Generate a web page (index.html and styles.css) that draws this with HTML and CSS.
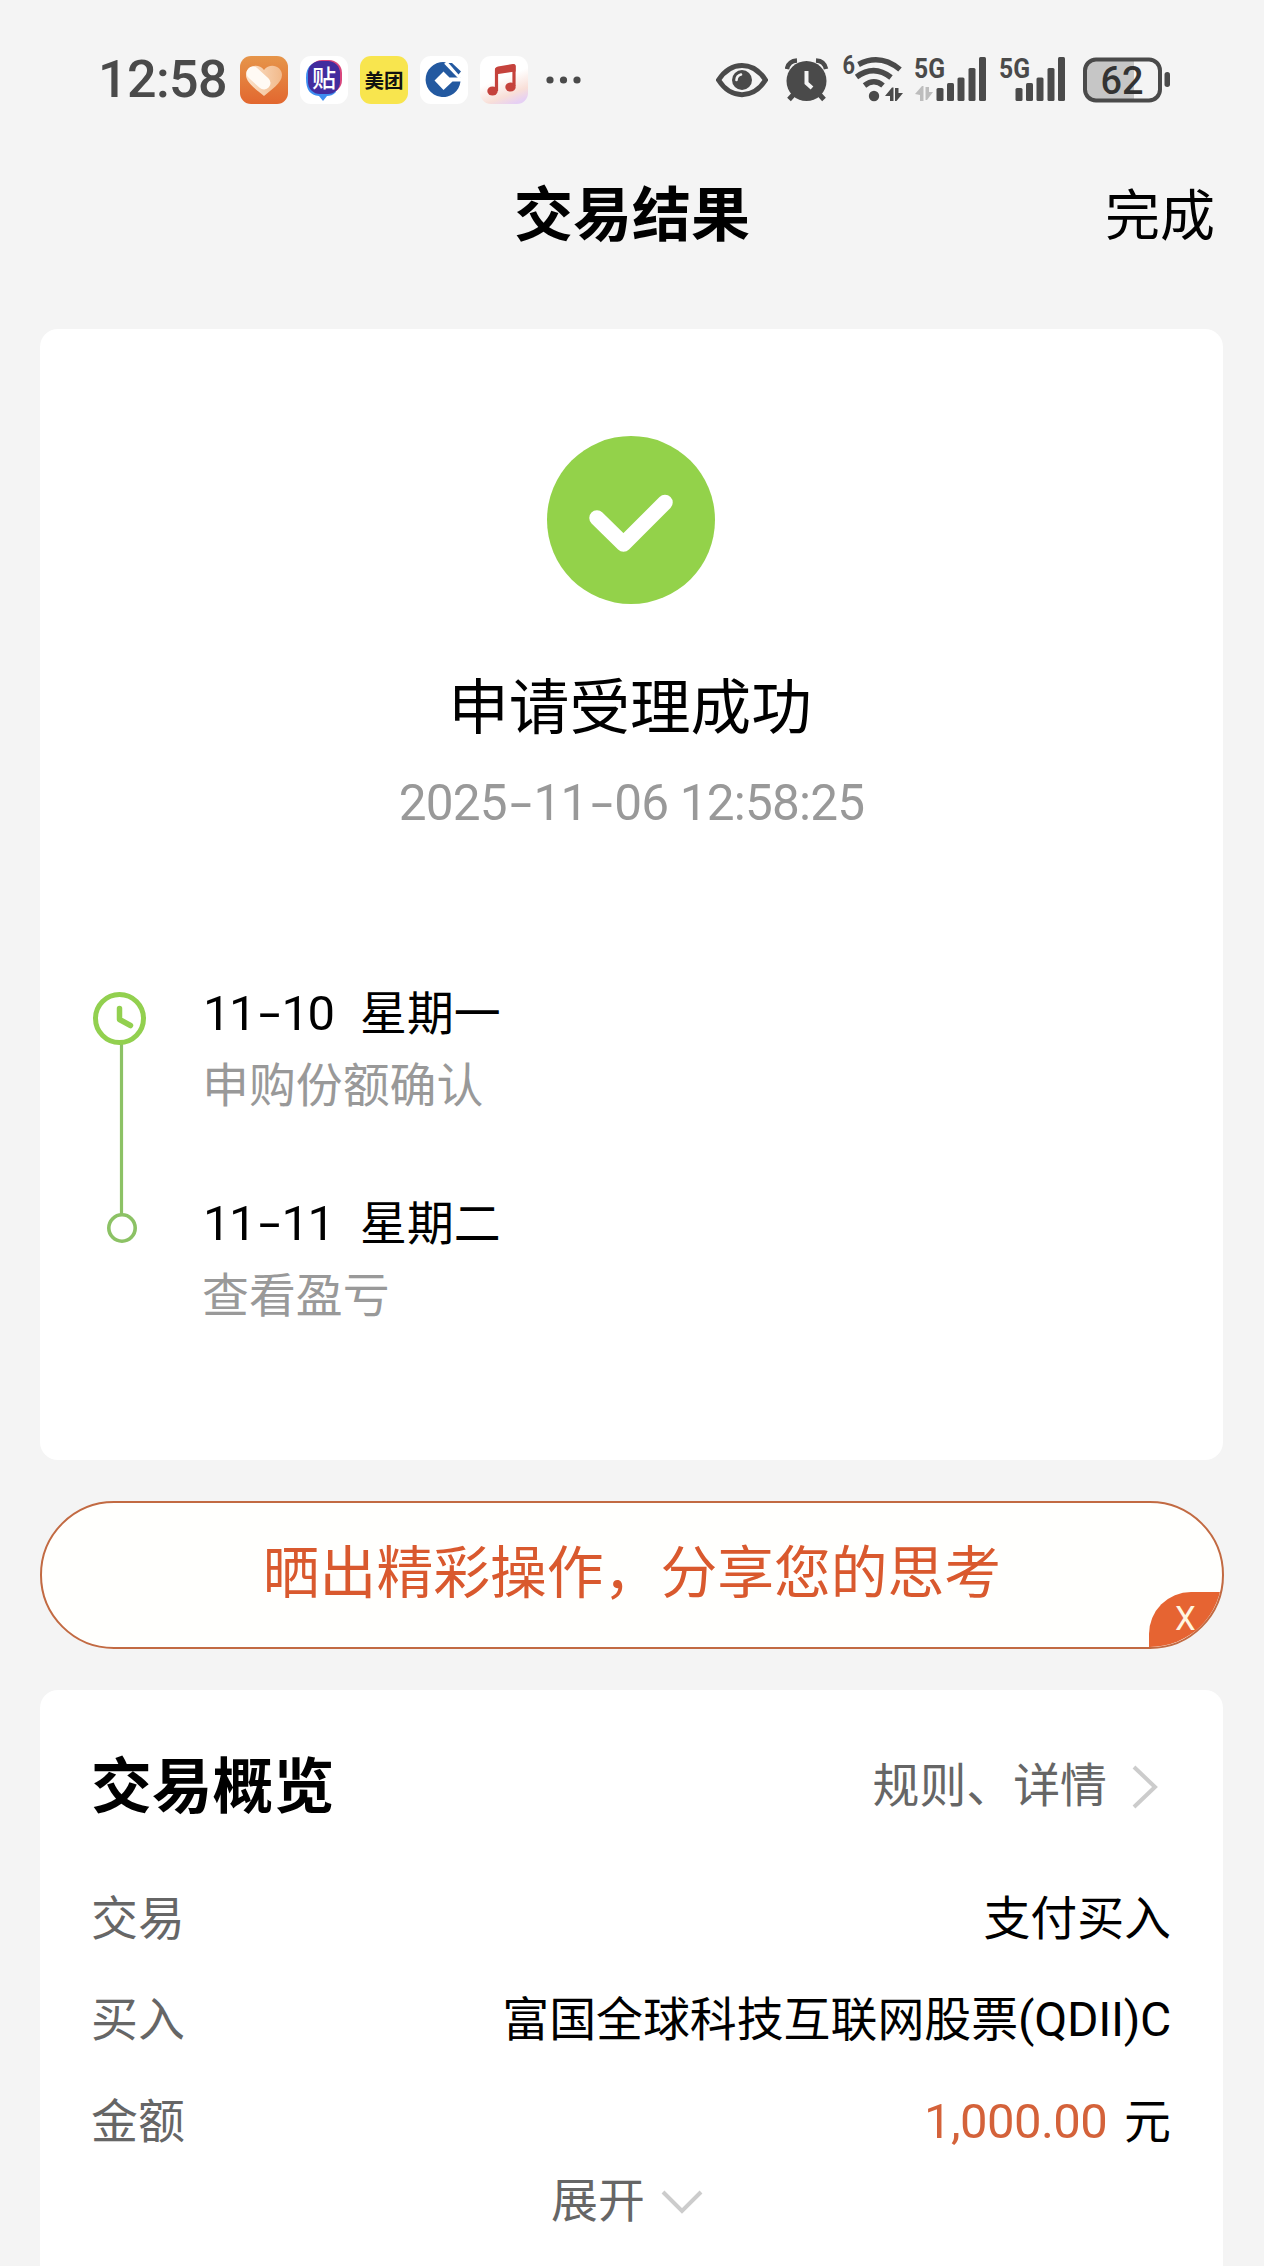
FILE: index.html
```html
<!DOCTYPE html>
<html lang="zh-CN">
<head>
  <meta charset="UTF-8" />
  <meta name="viewport" content="width=device-width, initial-scale=1.0" />
  <title>交易结果</title>
  <link rel="stylesheet" href="styles.css">
</head>
<body>
  <div class="statusbar">
    <div class="status-left">
      <span class="clock">12:58</span>
      <svg class="app" viewBox="0 0 48 48">
        <defs>
          <linearGradient id="orange" x1="0" y1="0" x2="0" y2="1"><stop offset="0" stop-color="#e6954a"/><stop offset="1" stop-color="#e2672f"/></linearGradient>
          <linearGradient id="heart" x1="0" y1="0" x2="1" y2="0"><stop offset="0" stop-color="#fbe3cc"/><stop offset="1" stop-color="#f2b98a"/></linearGradient>
        </defs>
        <rect width="48" height="48" rx="11" fill="url(#orange)"/>
        <path d="M24 40C17 34 6 27 6 19c0-9 12-13 18-5 6-8 18-4 18 5 0 8-11 15-18 21z" fill="url(#heart)"/>
        <path d="M13 17L24 27" stroke="#fffaf4" stroke-width="13" stroke-linecap="round"/>
      </svg>
      <svg class="app" viewBox="0 0 48 48">
        <rect width="48" height="48" rx="11" fill="#fff"/>
        <rect x="9" y="4" width="33" height="33" rx="13" fill="#d8467c"/>
        <path d="M6 22C6 10 12 6 22 6l14 30c-3 3-6 4-9 4l-4 5-4-5C10 39 6 34 6 22z" fill="#3e8df0"/>
        <rect x="8" y="5" width="32" height="33" rx="12" fill="#432c9e"/>
        <text class="app-text" x="24" y="30.500" font-size="24" fill="#fff">贴</text>
      </svg>
      <svg class="app" viewBox="0 0 48 48">
        <rect width="48" height="48" rx="11" fill="#f8e54e"/>
        <text class="app-text bold" x="24" y="31.500" font-size="19.500" fill="#111">美团</text>
      </svg>
      <svg class="app" viewBox="0 0 48 48">
        <rect width="48" height="48" rx="11" fill="#fff"/>
        <path fill-rule="evenodd" d="M27 6.500A17.500 17.500 0 1 0 40.500 25.500H32.500L23.500 34 14.500 24.500 23.500 15.500 29.500 21.500H41z" fill="#2359a0"/>
        <path d="M26 6L41 21.500" stroke="#fff" stroke-width="5"/>
        <path d="M28.500 7h3.500L41 15.500l-2.500 3z" fill="#2359a0"/>
      </svg>
      <svg class="app" viewBox="0 0 48 48">
        <defs>
          <linearGradient id="music" x1=".3" y1="0" x2=".7" y2="1"><stop offset=".45" stop-color="#fff"/><stop offset=".8" stop-color="#f8dfd8"/><stop offset="1" stop-color="#e6d0f4"/></linearGradient>
        </defs>
        <rect width="48" height="48" rx="11" fill="url(#music)"/>
        <path d="M16.500 35V13.500L34 10v20" fill="none" stroke="#c5423c" stroke-width="3.200" stroke-linejoin="round"/>
        <path d="M15 12.500Q16 11 18 10.500L33 8q2.600-.2 2.600 2v5.500L15 18.500z" fill="#c5423c"/>
        <ellipse cx="12.500" cy="35" rx="5.200" ry="4.600" fill="#c5423c"/>
        <ellipse cx="30.500" cy="31" rx="5.200" ry="4.600" fill="#c5423c"/>
      </svg>
      <svg class="more" viewBox="0 0 36 8">
        <circle cx="4" cy="4" r="3.600"/><circle cx="17.500" cy="4" r="3.600"/><circle cx="31" cy="4" r="3.600"/>
      </svg>
    </div>
    <div class="status-right">
      <svg width="52" height="48" viewBox="716 56 52 48">
        <path d="M718.500 80C731 60.500 753 60.500 765.500 80 753 99.500 731 99.500 718.500 80z" fill="none" stroke="#4a4a4a" stroke-width="5"/>
        <circle cx="742" cy="80" r="10" fill="#4a4a4a"/>
        <path d="M736.500 80a6 6 0 0 1 4.500-5.500" fill="none" stroke="#f4f4f4" stroke-width="2.600" stroke-linecap="round"/>
      </svg>
      <svg class="alarm" width="44" height="48" viewBox="785 56 44 48">
        <circle cx="806.500" cy="81" r="20" fill="#4a4a4a"/>
        <path d="M787 69q1.500-8 10-8.500M826 69q-1.500-8-10-8.500" fill="none" stroke="#4a4a4a" stroke-width="4.500"/>
        <path d="M794 94l-5 5.500M819 94l5 5.500" stroke="#4a4a4a" stroke-width="5"/>
        <path d="M806.500 71v12l5.500 5" fill="none" stroke="#f4f4f4" stroke-width="4"/>
      </svg>
      <svg class="wifi" width="62" height="68" viewBox="841 46 62 68">
        <text class="net" x="842.500" y="74" font-size="25" textLength="12.500" lengthAdjust="spacingAndGlyphs">6</text>
        <g fill="none" stroke="#4a4a4a" stroke-width="5.500">
          <path d="M858.500 64.500Q880 53 900 69.500"/>
          <path d="M856.500 77Q874 64 891 77.500"/>
          <path d="M864.500 85.500Q874 78 883 85.500"/>
        </g>
        <circle cx="874" cy="96" r="5.200" fill="#4a4a4a"/>
        <path d="M885 96l7-8.500h1.500V101H890v-5zM895 88h3.500v5h4.500l-6.500 8H895z" fill="#4a4a4a"/>
      </svg>
      <svg class="signal" width="75" height="68" viewBox="912 46 75 68">
        <text class="net" x="914" y="77.500" font-size="28" textLength="31" lengthAdjust="spacingAndGlyphs">5G</text>
        <path d="M915 94l7-8h1.500V101H920v-6zM925.500 87h3.500v5h4l-6 8h-1.500z" fill="#bdbdbd"/>
        <g fill="#4a4a4a">
          <rect x="936.500" y="88" width="7" height="13" rx="1.500"/><rect x="947" y="83" width="7" height="18" rx="1.500"/><rect x="957.500" y="77.500" width="7" height="23.500" rx="1.500"/><rect x="968.500" y="68" width="7" height="33" rx="1.500"/><rect x="979" y="57" width="7" height="44" rx="1.500"/>
        </g>
      </svg>
      <svg class="signal2" width="70" height="68" viewBox="997 46 70 68">
        <text class="net" x="999" y="77.500" font-size="28" textLength="31" lengthAdjust="spacingAndGlyphs">5G</text>
        <g fill="#4a4a4a">
          <rect x="1015.500" y="88" width="7" height="13" rx="1.500"/><rect x="1026" y="83" width="7" height="18" rx="1.500"/><rect x="1036.500" y="77.500" width="7" height="23.500" rx="1.500"/><rect x="1047.500" y="68" width="7" height="33" rx="1.500"/><rect x="1058" y="57" width="7" height="44" rx="1.500"/>
        </g>
      </svg>
      <svg class="battery" width="89" height="46" viewBox="1082 56 89 46">
        <path d="M1134 58.500h-38q-11 0-11 11v19q0 11 11 11h38z" fill="#c6c6c6"/>
        <rect x="1085" y="58.500" width="75" height="41" rx="11" fill="none" stroke="#4a4a4a" stroke-width="4"/>
        <rect x="1164.500" y="71" width="5.500" height="15" rx="2.700" fill="#4a4a4a"/>
        <text x="1122" y="93" font-size="39" font-weight="500" text-anchor="middle" textLength="43" lengthAdjust="spacingAndGlyphs" fill="#333">62</text>
      </svg>
    </div>
  </div>

  <header class="navbar">
    <h1>交易结果</h1>
    <a class="done">完成</a>
  </header>

  <section class="card result">
    <svg class="success" viewBox="0 0 168 168">
      <circle cx="84" cy="84" r="84" fill="#93d24a"/>
      <path d="M50 82L76.500 108 118 66.500" fill="none" stroke="#fff" stroke-width="15.500" stroke-linecap="round" stroke-linejoin="round"/>
    </svg>
    <h2>申请受理成功</h2>
    <p class="datetime">2025<i>-</i>11<i>-</i>06 12:58:25</p>

    <div class="timeline">
      <svg class="track" width="54" height="254" viewBox="93 991 54 254">
        <path d="M121.500 1044v170" stroke="#8cc265" stroke-width="3.200"/>
        <circle cx="119.500" cy="1018.500" r="24" fill="#fff" stroke="#92d04f" stroke-width="5"/>
        <path d="M119.500 1008.500v11l11 6" fill="none" stroke="#92d04f" stroke-width="5.500" stroke-linecap="round" stroke-linejoin="round"/>
        <circle cx="122" cy="1228" r="13.200" fill="#fff" stroke="#8cc265" stroke-width="3.600"/>
      </svg>
      <ul>
        <li>
          <p class="day"><span class="num">11<i>-</i>10</span>星期一</p>
          <p class="note">申购份额确认</p>
        </li>
        <li>
          <p class="day"><span class="num">11<i>-</i>11</span>星期二</p>
          <p class="note">查看盈亏</p>
        </li>
      </ul>
    </div>
  </section>

  <div class="share">
    <span>晒出精彩操作，分享您的思考</span>
    <b class="close">X</b>
  </div>

  <section class="card overview">
    <div class="overview-head">
      <h3>交易概览</h3>
      <a class="rules">规则、详情
        <svg width="28" height="46" viewBox="0 0 28 46"><path d="M3 3l21 20L3 43" fill="none" stroke="#ccc" stroke-width="4"/></svg>
      </a>
    </div>
    <dl>
      <div class="row"><dt>交易</dt><dd>支付买入</dd></div>
      <div class="row"><dt>买入</dt><dd>富国全球科技互联网股票<span class="latin">(QDII)C</span></dd></div>
      <div class="row"><dt>金额</dt><dd><span class="amount">1,000.00</span>元</dd></div>
    </dl>
    <a class="expand">展开
      <svg width="42" height="26" viewBox="0 0 42 26"><path d="M2 3l19 19L40 3" fill="none" stroke="#ccc" stroke-width="4"/></svg>
    </a>
  </section>
</body>
</html>
```
FILE: styles.css
```css
* { box-sizing: border-box; margin: 0; padding: 0; }
body { width: 1264px; height: 2266px; overflow: hidden; background: #f4f4f4; color: #000; font-family: Roboto, "Noto Sans CJK SC", sans-serif; font-size: 46.9px; }
i { font-style: normal; }
ul { list-style: none; }
svg { display: block; flex: none; }

/* status bar */
.statusbar { display: flex; justify-content: space-between; align-items: center; height: 160px; padding: 0 93px 0 98px; }
.status-left, .status-right { display: flex; align-items: center; }
.clock { width: 142px; font-size: 52px; font-weight: 500; line-height: 60px; color: #4a4a4a; letter-spacing: -0.6px; }
.app { width: 48px; height: 48px; margin-right: 12px; }
.app-text { text-anchor: middle; font-weight: 500; }
.app-text.bold { font-weight: 700; }
.more { width: 36px; height: 8px; margin-left: 6px; fill: #4a4a4a; }
.alarm { margin-left: 17px; }
.wifi { margin-left: 12px; }
.signal { margin-left: 9px; }
.signal2 { margin-left: 10px; }
.battery { margin-left: 15px; }
.net { font-weight: 700; fill: #4a4a4a; }

/* title bar */
.navbar { display: grid; grid-template-columns: 1fr auto 1fr; align-items: center; height: 108px; padding: 3px 49px 0; }
.navbar h1 { grid-column: 2; font-size: 59px; line-height: 80px; }
.done { justify-self: end; font-size: 55px; line-height: 80px; }

.card { margin: 0 41px 0 40px; background: #fff; border-radius: 18px; }

/* result card */
.result { height: 1131px; margin-top: 61px; padding-top: 107px; }
.success { width: 168px; height: 168px; margin: 0 auto; transform: translateX(-1px); }
.result h2 { margin-top: 63px; padding-right: 3px; font-size: 60.6px; font-weight: 400; line-height: 84px; text-align: center; }
.datetime { margin-top: 19px; font-size: 49.5px; line-height: 66px; text-align: center; color: #999; letter-spacing: -0.8px; }
.datetime i, .num i { display: inline-block; width: 26.7px; text-align: center; transform: scaleX(1.6); }
.timeline { display: flex; gap: 56px; margin-top: 155px; padding-left: 53px; }
.timeline li { height: 210px; }
.day { height: 65px; line-height: 46px; }
.num { display: inline-block; width: 157px; font-size: 49px; letter-spacing: -1.6px; }
.note { line-height: 60px; margin-left: -1px; color: #999; }

/* share banner */
.share { position: relative; display: flex; align-items: center; justify-content: center; height: 148px; margin: 41px 40px 0; padding-bottom: 14px; overflow: hidden; background: #fffffd; border: 2px solid #c26a42; border-radius: 74px; font-size: 56.8px; color: #d9592e; }
.close { position: absolute; right: -2px; bottom: 0; width: 75px; height: 55px; padding-left: 26px; background: #e66432; border-top-left-radius: 42px; font-size: 33px; font-weight: 400; line-height: 53px; color: #fff6e0; }

/* overview card */
.overview { height: 620px; margin-top: 41px; padding: 56px 52px 0 51px; border-radius: 18px 18px 0 0; }
.overview-head { display: flex; justify-content: space-between; align-items: center; height: 80px; }
.overview-head h3 { padding-top: 4px; font-size: 60.8px; line-height: 80px; }
.rules { display: flex; align-items: center; gap: 24px; height: 46px; padding-right: 12px; line-height: 38px; color: #666; }
.rules svg { margin-top: 1px; }
.overview dl { margin-top: 42px; }
.row { display: flex; justify-content: space-between; height: 101.3px; line-height: 102px; }
dt { color: #666; }
.latin { font-size: 48px; letter-spacing: -0.3px; }
.amount { margin-right: 17px; font-size: 49px; letter-spacing: -0.6px; color: #d4623a; }
.expand { display: flex; align-items: center; justify-content: center; gap: 16px; height: 58px; margin-right: 8px; line-height: 52px; color: #666; }
.expand svg { margin-top: 3px; }
```
